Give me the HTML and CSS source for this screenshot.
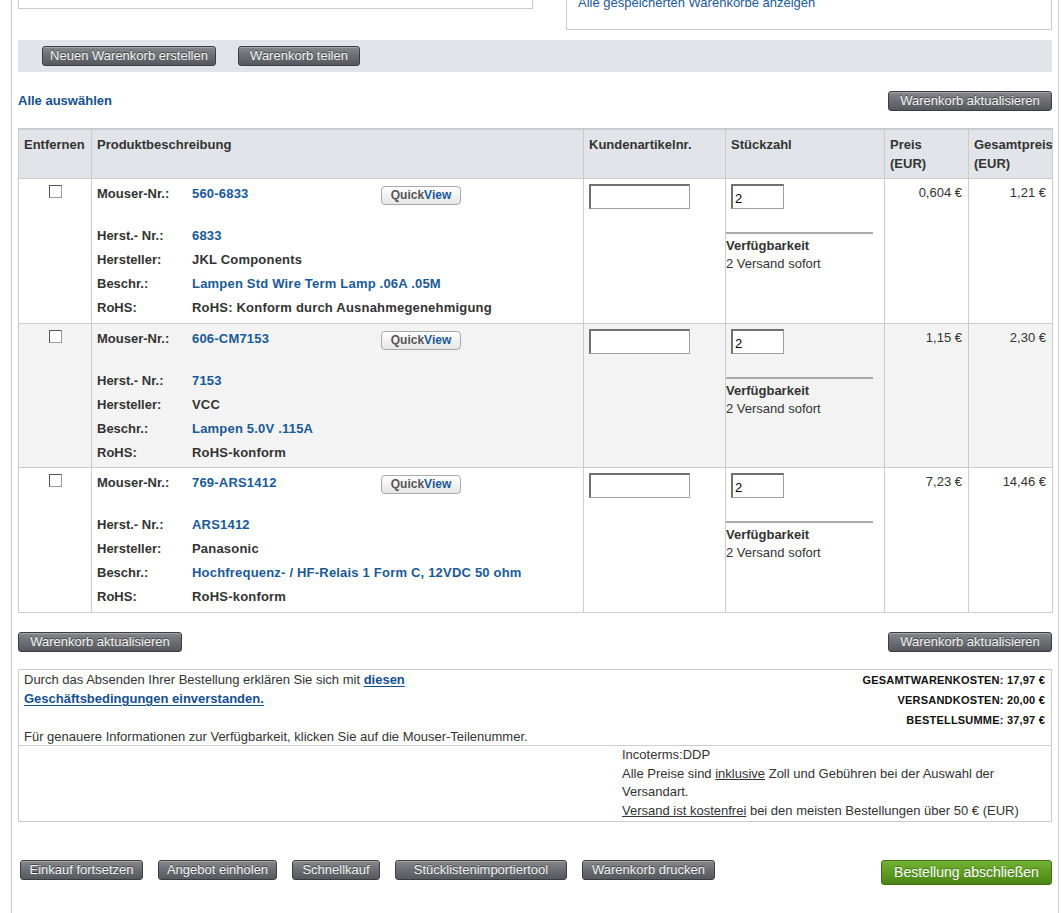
FILE: index.html
```html
<!DOCTYPE html>
<html lang="de">
<head>
<meta charset="utf-8">
<title>Warenkorb</title>
<link rel="stylesheet" href="styles.css">
</head>
<body>
<div class="page">
  <div class="top-row">
    <div class="top-left"></div>
    <div class="top-right"><a href="#" class="plain-link">Alle gespeicherten Warenkörbe anzeigen</a></div>
  </div>

  <div class="cart-bar">
    <button class="btn b-new">Neuen Warenkorb erstellen</button>
    <button class="btn b-share">Warenkorb teilen</button>
  </div>

  <div class="select-row">
    <a href="#" class="select-all">Alle auswählen</a>
    <button class="btn b-upd">Warenkorb aktualisieren</button>
  </div>

  <table class="cart">
    <colgroup>
      <col class="c-rem"><col class="c-desc"><col class="c-cust"><col class="c-qty"><col class="c-price"><col class="c-total">
    </colgroup>
    <thead>
      <tr>
        <th>Entfernen</th>
        <th>Produktbeschreibung</th>
        <th>Kundenartikelnr.</th>
        <th>Stückzahl</th>
        <th>Preis<br>(EUR)</th>
        <th>Gesamtpreis<br>(EUR)</th>
      </tr>
    </thead>
    <tbody>
      <tr>
        <td class="rem"><input type="checkbox" class="cb"></td>
        <td class="desc">
          <div class="desc-grid">
            <span class="lbl">Mouser-Nr.:</span><a href="#" class="val link">560-6833</a><span class="qv-wrap"><button class="qv">Quick<span>View</span></button></span>
            <span class="lbl">Herst.- Nr.:</span><a href="#" class="val link">6833</a><span></span>
            <span class="lbl">Hersteller:</span><span class="val">JKL Components</span><span></span>
            <span class="lbl">Beschr.:</span><a href="#" class="val link">Lampen Std Wire Term Lamp .06A .05M</a><span></span>
            <span class="lbl">RoHS:</span><span class="val">RoHS: Konform durch Ausnahmegenehmigung</span><span></span>
          </div>
        </td>
        <td class="cust"><input type="text" class="txt cust-in"></td>
        <td class="qty">
          <input type="text" class="txt qty-in" value="2">
          <div class="avail">
            <div class="avail-h">Verfügbarkeit</div>
            <div>2 Versand sofort</div>
          </div>
        </td>
        <td class="num">0,604 €</td>
        <td class="num">1,21 €</td>
      </tr>
      <tr class="alt">
        <td class="rem"><input type="checkbox" class="cb"></td>
        <td class="desc">
          <div class="desc-grid">
            <span class="lbl">Mouser-Nr.:</span><a href="#" class="val link">606-CM7153</a><span class="qv-wrap"><button class="qv">Quick<span>View</span></button></span>
            <span class="lbl">Herst.- Nr.:</span><a href="#" class="val link">7153</a><span></span>
            <span class="lbl">Hersteller:</span><span class="val">VCC</span><span></span>
            <span class="lbl">Beschr.:</span><a href="#" class="val link">Lampen 5.0V .115A</a><span></span>
            <span class="lbl">RoHS:</span><span class="val">RoHS-konform</span><span></span>
          </div>
        </td>
        <td class="cust"><input type="text" class="txt cust-in"></td>
        <td class="qty">
          <input type="text" class="txt qty-in" value="2">
          <div class="avail">
            <div class="avail-h">Verfügbarkeit</div>
            <div>2 Versand sofort</div>
          </div>
        </td>
        <td class="num">1,15 €</td>
        <td class="num">2,30 €</td>
      </tr>
      <tr>
        <td class="rem"><input type="checkbox" class="cb"></td>
        <td class="desc">
          <div class="desc-grid">
            <span class="lbl">Mouser-Nr.:</span><a href="#" class="val link">769-ARS1412</a><span class="qv-wrap"><button class="qv">Quick<span>View</span></button></span>
            <span class="lbl">Herst.- Nr.:</span><a href="#" class="val link">ARS1412</a><span></span>
            <span class="lbl">Hersteller:</span><span class="val">Panasonic</span><span></span>
            <span class="lbl">Beschr.:</span><a href="#" class="val link">Hochfrequenz- / HF-Relais 1 Form C, 12VDC 50 ohm</a><span></span>
            <span class="lbl">RoHS:</span><span class="val">RoHS-konform</span><span></span>
          </div>
        </td>
        <td class="cust"><input type="text" class="txt cust-in"></td>
        <td class="qty">
          <input type="text" class="txt qty-in" value="2">
          <div class="avail">
            <div class="avail-h">Verfügbarkeit</div>
            <div>2 Versand sofort</div>
          </div>
        </td>
        <td class="num">7,23 €</td>
        <td class="num">14,46 €</td>
      </tr>
    </tbody>
  </table>

  <div class="update-row">
    <button class="btn b-upd">Warenkorb aktualisieren</button>
    <button class="btn b-upd">Warenkorb aktualisieren</button>
  </div>

  <div class="summary">
    <div class="summary-top">
      <div class="terms">
        Durch das Absenden Ihrer Bestellung erklären Sie sich mit <a href="#" class="terms-link">diesen Geschäftsbedingungen einverstanden.</a><br><br>
        Für genauere Informationen zur Verfügbarkeit, klicken Sie auf die Mouser-Teilenummer.
      </div>
      <div class="totals">
        <div>GESAMTWARENKOSTEN: 17,97 €</div>
        <div>VERSANDKOSTEN: 20,00 €</div>
        <div>BESTELLSUMME: 37,97 €</div>
      </div>
    </div>
    <div class="summary-bottom">
      <div></div>
      <div class="notes">
        Incoterms:DDP<br>
        Alle Preise sind <u>inklusive</u> Zoll und Gebühren bei der Auswahl der Versandart.<br>
        <u>Versand ist kostenfrei</u> bei den meisten Bestellungen über 50 € (EUR)
      </div>
    </div>
  </div>

  <div class="action-row">
    <div class="action-left">
      <button class="btn b-cont">Einkauf fortsetzen</button>
      <button class="btn b-quote">Angebot einholen</button>
      <button class="btn b-quick">Schnellkauf</button>
      <button class="btn b-bom">Stücklistenimportiertool</button>
      <button class="btn b-print">Warenkorb drucken</button>
    </div>
    <button class="btn-green">Bestellung abschließen</button>
  </div>
</div>
</body>
</html>
```

FILE: styles.css
```css
html, body {
  margin: 0;
  padding: 0;
  background: #fff;
}
body {
  font-family: "Liberation Sans", Arial, sans-serif;
  font-size: 13px;
  color: #333;
  overflow: hidden;
}
.page {
  margin-left: 11px;
  width: 1048px;
  box-sizing: border-box;
  border-left: 1px solid #ccc;
  border-right: 1px solid #ccc;
  padding: 0 6px;
  min-height: 980px;
}
.top-row {
  display: flex;
  justify-content: space-between;
  align-items: flex-start;
  margin-top: -40px;
}
.top-left {
  width: 515px;
  height: 49px;
  box-sizing: border-box;
  border: 1px solid #ccc;
}
.top-right {
  width: 486px;
  height: 70px;
  box-sizing: border-box;
  border: 1px solid #ccc;
  padding: 0 11px 17px;
  display: flex;
  align-items: flex-end;
}
.plain-link {
  color: #1a5a96;
  text-decoration: none;
  font-size: 13px;
  line-height: 18px;
}
.cart-bar {
  margin-top: 10px;
  height: 32px;
  box-sizing: border-box;
  background: #e1e4e8;
  padding: 6px 24px;
  display: flex;
  gap: 22px;
  align-items: flex-start;
}
.btn {
  font-family: "Liberation Sans", Arial, sans-serif;
  font-size: 13px;
  color: #f4f4f4;
  height: 20px;
  line-height: 18px;
  padding: 0;
  text-align: center;
  border: 1px solid #3b3d40;
  border-radius: 3px;
  background: linear-gradient(#85888c 0%, #6d7074 45%, #55585c 100%);
  box-shadow: inset 0 1px 0 rgba(255,255,255,0.25);
  text-shadow: 0 -1px 0 rgba(0,0,0,0.45);
  white-space: nowrap;
  cursor: pointer;
}
.b-new { width: 174px; }
.b-share { width: 122px; }
.b-upd { width: 164px; }
.b-cont { width: 123px; }
.b-quote { width: 119px; }
.b-quick { width: 88px; }
.b-bom { width: 172px; }
.b-print { width: 133px; }
.select-row {
  margin-top: 19px;
  display: flex;
  justify-content: space-between;
  align-items: center;
}
.select-all {
  color: #15508e;
  font-weight: bold;
  font-size: 13px;
  text-decoration: none;
  position: relative;
  top: -1px;
}
.cart {
  margin-top: 17px;
  width: 1034px;
  table-layout: fixed;
  border-collapse: collapse;
  border-top: 2px solid #ccc;
  border-left: 1px solid #ccc;
  border-right: 1px solid #ccc;
}
.c-rem { width: 73px; }
.c-desc { width: 492px; }
.c-cust { width: 142px; }
.c-qty { width: 159px; }
.c-price { width: 84px; }
.c-total { width: 84px; }
.cart th {
  background: #e1e4e8;
  text-align: left;
  vertical-align: top;
  font-size: 13px;
  font-weight: bold;
  color: #333;
  line-height: 19px;
  padding: 5px 0 5px 5px;
  height: 38px;
  border: 1px solid #ccc;
  border-top: 0;
  white-space: nowrap;
  overflow: hidden;
}
.cart td {
  border: 1px solid #ccc;
  vertical-align: top;
  padding: 0;
}
.cart tr.alt td {
  background: #f3f3f3;
}
.rem {
  text-align: center;
  padding-top: 6px !important;
  line-height: 0;
}
.cb {
  -webkit-appearance: none;
  appearance: none;
  width: 13px;
  height: 13px;
  margin: 0;
  box-sizing: border-box;
  border: 1px solid #9a9a9a;
  border-top-color: #555;
  border-left-color: #555;
  background: #fff;
  display: inline-block;
  vertical-align: top;
}
.desc {
  padding: 3px 5px 3px !important;
}
.cart tr.alt .desc {
  padding-bottom: 2px !important;
}
.desc-grid {
  display: grid;
  grid-template-columns: 95px 189px 1fr;
  grid-template-rows: 42px 24px 24px 24px 24px;
  font-size: 13px;
  font-weight: bold;
  line-height: 24px;
}
.lbl { color: #333; }
.val { color: #333; white-space: nowrap; letter-spacing: 0.2px; }
.val.link { color: #1a5a96; text-decoration: none; }
.qv-wrap { padding-top: 4px; }
.qv {
  display: block;
  width: 80px;
  height: 19px;
  padding: 0;
  font-family: "Liberation Sans", Arial, sans-serif;
  font-size: 12px;
  font-weight: bold;
  color: #555;
  line-height: 17px;
  border: 1px solid #a9a9a9;
  border-radius: 4px;
  background: linear-gradient(#ffffff, #e6e6e6);
}
.qv span { color: #1a5a96; }
.cust {
  padding: 5px 5px 0 !important;
}
.txt {
  box-sizing: border-box;
  height: 25px;
  border: 1px solid #a0a0a0;
  border-top: 2px solid #707070;
  border-left: 2px solid #707070;
  background: #fff;
  font-family: "Liberation Sans", Arial, sans-serif;
  font-size: 13px;
  color: #000;
  padding: 2px 2px 0;
  margin: 0;
  display: block;
}
.cust-in { width: 101px; }
.qty-in { width: 53px; margin-left: 5px; }
.qty {
  padding-top: 5px !important;
}
.avail {
  margin-top: 23px;
  width: 147px;
  border-top: 2px solid #aaa;
  padding-top: 3px;
  font-size: 13px;
  line-height: 18px;
  color: #333;
}
.avail-h {
  font-weight: bold;
}
.num {
  text-align: right;
  font-size: 13px;
  line-height: 18px;
  padding: 5px 6px 0 0 !important;
}
.update-row {
  margin-top: 19px;
  display: flex;
  justify-content: space-between;
}
.summary {
  margin-top: 17px;
  border: 1px solid #ccc;
  font-size: 13px;
  line-height: 19px;
  color: #333;
}
.summary-top {
  display: flex;
  justify-content: space-between;
  padding: 0 6px 0 5px;
  border-bottom: 1px solid #ccc;
  height: 75px;
}
.terms {
  width: 505px;
}
.terms-link {
  color: #15508e;
  font-weight: bold;
  text-decoration: underline;
  text-underline-offset: 2px;
}
.totals {
  text-align: right;
  font-weight: bold;
  font-size: 11px;
  line-height: 20px;
  color: #111;
  letter-spacing: 0.2px;
}
.summary-bottom {
  display: grid;
  grid-template-columns: 598px 1fr;
}
.notes {
  padding: 0 6px 0 5px;
  line-height: 18.7px;
}
.action-row {
  margin-top: 38px;
  display: flex;
  justify-content: space-between;
  align-items: flex-start;
}
.action-left {
  display: flex;
  gap: 15px;
  padding-left: 2px;
}
.btn-green {
  font-family: "Liberation Sans", Arial, sans-serif;
  font-size: 14px;
  color: #fff;
  width: 171px;
  height: 25px;
  padding: 0;
  text-align: center;
  border: 1px solid #3f7113;
  border-radius: 3px;
  background: linear-gradient(#72b333 0%, #5d9b22 50%, #4b8415 100%);
  text-shadow: 0 -1px 0 rgba(0,0,0,0.3);
  white-space: nowrap;
}
```
